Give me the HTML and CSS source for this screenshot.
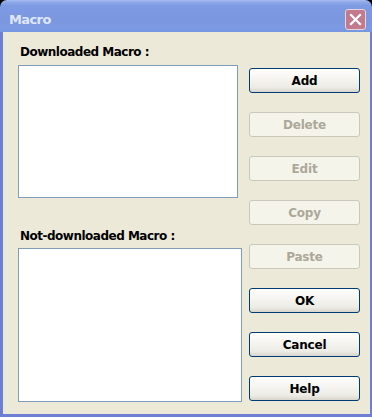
FILE: index.html
```html
<!DOCTYPE html>
<html>
<head>
<meta charset="utf-8">
<link rel="stylesheet" href="styles.css">
</head>
<body>
<div class="window">
  <div class="titlebar">
    <span class="title">Macro</span>
    <span class="close">
      <svg width="13" height="13" viewBox="0 0 13 13"><path d="M2 2 L11 11 M11 2 L2 11" stroke="#fff" stroke-width="2.2" stroke-linecap="square"/></svg>
    </span>
  </div>
  <div class="frame">
    <div class="content">
      <div class="left">
        <div class="label">Downloaded Macro :</div>
        <div class="listbox lb1"></div>
        <div class="label label2">Not-downloaded Macro :</div>
        <div class="listbox lb2"></div>
      </div>
      <div class="buttons">
        <button class="btn">Add</button>
        <button class="btn" disabled>Delete</button>
        <button class="btn" disabled>Edit</button>
        <button class="btn" disabled>Copy</button>
        <button class="btn" disabled>Paste</button>
        <button class="btn">OK</button>
        <button class="btn">Cancel</button>
        <button class="btn">Help</button>
      </div>
    </div>
  </div>
</div>
</body>
</html>
```

FILE: styles.css
```css
html, body {
  margin: 0;
  padding: 0;
  background: #000;
}
.window {
  width: 372px;
  height: 417px;
  display: flex;
  flex-direction: column;
  font-family: "DejaVu Sans", Tahoma, sans-serif;
}
.titlebar {
  height: 32px;
  flex: none;
  border-radius: 7px 7px 0 0;
  background: linear-gradient(to bottom, #a8bff3 0px, #8faaea 2px, #7d9ae2 6px, #7a97df 20px, #7c9ae3 29px, #7595e0 32px);
  display: flex;
  align-items: center;
  justify-content: space-between;
  padding: 0 6px 0 9px;
  box-sizing: border-box;
}
.title {
  color: #dfe7f9;
  font-family: "DejaVu Sans", sans-serif;
  font-size: 13px;
  font-weight: 600;
  letter-spacing: -0.6px;
  margin-top: 6px;
}
.close {
  width: 21px;
  height: 21px;
  box-sizing: border-box;
  border: 1px solid #e8d4de;
  border-radius: 3px;
  background: #c27a8e;
  display: flex;
  align-items: center;
  justify-content: center;
  margin-top: 6px;
}
.frame {
  flex: 1;
  background: #6d7fd4;
  padding: 0 3px 3px 3px;
  display: flex;
}
.content {
  flex: 1;
  background: #ece9d8;
  display: flex;
  padding: 0 10px 0 15px;
}
.left {
  width: 224px;
  display: flex;
  flex-direction: column;
}
.label {
  font-size: 12px;
  font-weight: bold;
  letter-spacing: -0.5px;
  color: #000;
  padding-left: 2px;
  margin-top: 13px;
  height: 20px;
  line-height: 14px;
}
.label2 {
  margin-top: 31px;
  height: 19px;
}
.listbox {
  background: #fff;
  border: 1px solid #7f9db9;
  box-sizing: border-box;
}
.lb1 {
  width: 220px;
  height: 133px;
}
.lb2 {
  width: 224px;
  height: 154px;
}
.buttons {
  margin-left: 7px;
  padding-top: 36px;
  display: flex;
  flex-direction: column;
  gap: 19px;
}
.btn {
  width: 111px;
  height: 25px;
  box-sizing: border-box;
  border: 1px solid #003c74;
  border-radius: 3px;
  background: linear-gradient(to bottom, #ffffff 0%, #f6f5f1 40%, #ecebe5 80%, #d8d5cb 100%);
  font-family: "DejaVu Sans", Tahoma, sans-serif;
  font-size: 12px;
  font-weight: bold;
  letter-spacing: -0.2px;
  color: #000;
  padding: 0;
  margin: 0;
}
.btn:disabled {
  border-color: #cac8bb;
  background: #f5f4ea;
  color: #aca899;
}
```
